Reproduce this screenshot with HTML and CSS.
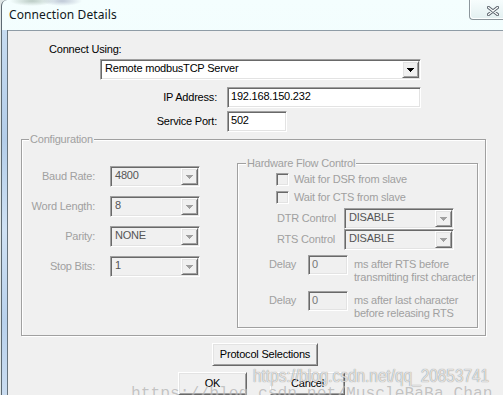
FILE: index.html
```html
<!DOCTYPE html>
<html>
<head>
<meta charset="utf-8">
<title>Connection Details</title>
<link rel="stylesheet" href="styles.css">
</head>
<body>
<div class="window">
  <div class="titlebar">
    <span class="title">Connection Details</span>
    <div class="close">
      <svg width="12" height="10" viewBox="0 0 12 10"><path d="M1.5 1.5L10.5 8.5M10.5 1.5L1.5 8.5" stroke="#5b636c" stroke-width="3.2" stroke-linecap="round"/><path d="M1.5 1.5L10.5 8.5M10.5 1.5L1.5 8.5" stroke="#fbfdfd" stroke-width="1.3" stroke-linecap="round"/></svg>
    </div>
  </div>
  <div class="frame">
    <div class="frame-left"></div>
    <div class="client">
      <div class="connect-label">Connect Using:</div>
      <div class="combo combo-main sunken">
        <span class="val">Remote modbusTCP Server</span>
        <span class="drop raised"><svg class="arrow" width="7" height="4" viewBox="0 0 7 4"><path d="M0 0h7v1h-1v1h-1v1h-1v1h-1v-1h-1v-1h-1v-1h-1z"/></svg></span>
      </div>
      <div class="field-row">
        <span class="lbl">IP Address:</span>
        <div class="field sunken ip">192.168.150.232</div>
      </div>
      <div class="field-row">
        <span class="lbl">Service Port:</span>
        <div class="field sunken port">502</div>
      </div>

      <div class="group config">
        <span class="legend">Configuration</span>
        <div class="config-left">
          <div class="cfg-row">
            <span class="cfg-lbl">Baud Rate:</span>
            <div class="combo combo-dis sunken"><span class="val">4800</span><span class="drop raised"><svg class="arrow" width="7" height="4" viewBox="0 0 7 4"><path d="M0 0h7v1h-1v1h-1v1h-1v1h-1v-1h-1v-1h-1v-1h-1z"/></svg></span></div>
          </div>
          <div class="cfg-row">
            <span class="cfg-lbl">Word Length:</span>
            <div class="combo combo-dis sunken"><span class="val">8</span><span class="drop raised"><svg class="arrow" width="7" height="4" viewBox="0 0 7 4"><path d="M0 0h7v1h-1v1h-1v1h-1v1h-1v-1h-1v-1h-1v-1h-1z"/></svg></span></div>
          </div>
          <div class="cfg-row">
            <span class="cfg-lbl">Parity:</span>
            <div class="combo combo-dis sunken"><span class="val">NONE</span><span class="drop raised"><svg class="arrow" width="7" height="4" viewBox="0 0 7 4"><path d="M0 0h7v1h-1v1h-1v1h-1v1h-1v-1h-1v-1h-1v-1h-1z"/></svg></span></div>
          </div>
          <div class="cfg-row">
            <span class="cfg-lbl">Stop Bits:</span>
            <div class="combo combo-dis sunken"><span class="val">1</span><span class="drop raised"><svg class="arrow" width="7" height="4" viewBox="0 0 7 4"><path d="M0 0h7v1h-1v1h-1v1h-1v1h-1v-1h-1v-1h-1v-1h-1z"/></svg></span></div>
          </div>
        </div>

        <div class="group hfc">
          <span class="legend legend-hfc">Hardware Flow Control</span>
          <div class="chk-row"><span class="chk sunken"></span><span>Wait for DSR from slave</span></div>
          <div class="chk-row"><span class="chk sunken"></span><span>Wait for CTS from slave</span></div>
          <div class="ctl-row">
            <span class="ctl-lbl">DTR Control</span>
            <div class="combo combo-dis combo-ctl sunken"><span class="val">DISABLE</span><span class="drop raised"><svg class="arrow" width="7" height="4" viewBox="0 0 7 4"><path d="M0 0h7v1h-1v1h-1v1h-1v1h-1v-1h-1v-1h-1v-1h-1z"/></svg></span></div>
          </div>
          <div class="ctl-row">
            <span class="ctl-lbl">RTS Control</span>
            <div class="combo combo-dis combo-ctl sunken"><span class="val">DISABLE</span><span class="drop raised"><svg class="arrow" width="7" height="4" viewBox="0 0 7 4"><path d="M0 0h7v1h-1v1h-1v1h-1v1h-1v-1h-1v-1h-1v-1h-1z"/></svg></span></div>
          </div>
          <div class="delay-row">
            <span class="delay-lbl">Delay</span>
            <div class="delay-box sunken">0</div>
            <div class="delay-desc">ms after RTS before<br>transmitting first character</div>
          </div>
          <div class="delay-row">
            <span class="delay-lbl">Delay</span>
            <div class="delay-box sunken">0</div>
            <div class="delay-desc">ms after last character<br>before releasing RTS</div>
          </div>
        </div>
      </div>

      <div class="btn raised btn-protocol">Protocol Selections</div>
      <div class="ok-row">
        <div class="btn raised btn-ok">OK</div>
        <div class="btn raised btn-cancel">Cancel</div>
      </div>
    </div>
  </div>
</div>
<div class="wm wm1">https://blog.csdn.net/qq_20853741</div>
<div class="wm wm2">https://blog.csdn.net/MuscleBaBa_Chan</div>
</body>
</html>
```

FILE: styles.css
```css
* { box-sizing: border-box; }

html, body { margin: 0; padding: 0; }

body {
  width: 503px;
  height: 395px;
  overflow: hidden;
  position: relative;
  background: #dfe6e6;
  font-family: "Liberation Sans", Arial, sans-serif;
  font-size: 11px;
  letter-spacing: -0.2px;
  color: #000;
}

.window {
  margin-left: 1px;
  width: 516px;
  height: 395px;
  overflow: hidden;
  border-left: 1px solid #5d6972;
  border-top-left-radius: 6px;
  background:
    radial-gradient(ellipse 22px 5px at 30px 1px, rgba(80, 110, 90, 0.35), transparent),
    radial-gradient(ellipse 20px 5px at 60px 1px, rgba(90, 100, 140, 0.35), transparent),
    linear-gradient(#f4fefe, #e7f8f9);
  display: flex;
  flex-direction: column;
}

.titlebar {
  height: 30px;
  flex: none;
  display: flex;
  align-items: flex-start;
}

.title {
  margin: 7px 0 0 7px;
  font-family: "Noto Sans", "Open Sans", sans-serif;
  font-size: 12px;
  line-height: 16px;
  letter-spacing: 0.1px;
  color: #101820;
}

.close {
  margin-left: auto;
  width: 48px;
  height: 20px;
  border-left: 1px solid #8c969c;
  border-bottom: 1px solid #8c969c;
  border-bottom-left-radius: 4px;
  background: linear-gradient(#f7fdfd, #e3f0f1);
  box-shadow: inset 1px -1px 0 #fdffff;
  padding: 6px 0 0 17px;
  display: flex;
  align-items: flex-start;
}

.frame {
  flex: 1;
  min-height: 0;
  display: flex;
}

.frame-left {
  width: 6px;
  background: linear-gradient(#c6dbf0, #b3cde9 30%, #cfe1f3 55%, #b8d1ec 80%, #cadcf0);
  border-right: 1px solid #66737d;
}

.client {
  flex: 1;
  background: #f0f0f0;
  border-top: 1px solid #8f9ca6;
  padding-top: 12px;
  overflow: hidden;
}

/* 3D borders */
.sunken {
  border: 1px solid;
  border-color: #a0a0a0 #ffffff #ffffff #a0a0a0;
  padding: 1px;
  box-shadow: inset 1px 1px 0 #696969, inset -1px -1px 0 #e3e3e3;
}

.raised {
  border: 1px solid;
  border-color: #ffffff #696969 #696969 #ffffff;
  box-shadow: inset 1px 1px 0 #e3e3e3, inset -1px -1px 0 #a0a0a0;
  background: #f0f0f0;
}

/* top section */
.connect-label {
  margin-left: 41px;
  line-height: 13px;
}

.combo {
  display: flex;
  height: 21px;
  background: #fff;
}

.combo .val {
  flex: 1;
  line-height: 15px;
  padding-left: 3px;
  white-space: nowrap;
}

.combo .drop {
  width: 17px;
  display: flex;
  align-items: center;
  justify-content: center;
}

.arrow { display: block; fill: #000; }

.combo-main {
  margin: 3px 0 0 92px;
  width: 321px;
}

.field-row {
  display: flex;
  align-items: center;
  margin-top: 7px;
}

.field-row + .field-row { margin-top: 3px; }

.lbl {
  width: 209px;
  text-align: right;
  line-height: 13px;
  margin-right: 10px;
}

.field {
  height: 21px;
  background: #fff;
  line-height: 15px;
  padding-left: 3px;
}

.ip { width: 194px; }
.port { width: 60px; }

/* group boxes */
.group {
  position: relative;
  border: 1px solid #a0a0a0;
  box-shadow: inset 1px 1px 0 #fff, 1px 1px 0 #fff;
}

.legend {
  position: absolute;
  top: -7px;
  left: 7px;
  padding: 0 1px;
  background: #f0f0f0;
  line-height: 13px;
  color: #a0a0a0;
  white-space: nowrap;
}

.legend-hfc { left: 8px; }

.config {
  margin: 7px 0 0 13px;
  width: 465px;
  height: 197px;
  display: flex;
  align-items: flex-start;
}

.config-left {
  margin-top: 26px;
  width: 178px;
  display: flex;
  flex-direction: column;
  gap: 9px;
}

.cfg-row {
  display: flex;
  align-items: center;
}

.cfg-lbl {
  width: 73px;
  margin-right: 15px;
  text-align: right;
  line-height: 13px;
  color: #a0a0a0;
}

.combo-dis {
  width: 90px;
  background: #f0f0f0;
}

.combo-dis .val { color: #555; }
.combo-dis .arrow { fill: #a0a0a0; }

.hfc {
  margin: 23px 0 0 37px;
  width: 241px;
  height: 165px;
  padding-top: 9px;
  color: #a0a0a0;
}

.chk-row {
  display: flex;
  align-items: center;
  gap: 5px;
  margin-left: 38px;
  height: 13px;
  line-height: 13px;
  white-space: nowrap;
}

.chk-row + .chk-row { margin-top: 5px; }

.chk {
  width: 13px;
  height: 13px;
  background: #f0f0f0;
}

.ctl-row {
  display: flex;
  align-items: center;
  margin-left: 39px;
}

.chk-row + .ctl-row { margin-top: 4px; }

.ctl-lbl {
  width: 67px;
  line-height: 13px;
  white-space: nowrap;
}

.combo-ctl { width: 110px; }

.delay-row {
  display: flex;
  align-items: flex-start;
  margin-left: 31px;
  height: 36px;
}

.ctl-row + .delay-row { margin-top: 5px; }

.delay-lbl {
  width: 39px;
  margin-top: 3px;
  line-height: 13px;
}

.delay-box {
  width: 40px;
  height: 20px;
  background: #f0f0f0;
  line-height: 15px;
  padding-left: 3px;
  color: #777;
}

.delay-desc {
  margin: 3px 0 0 6px;
  line-height: 13px;
  white-space: nowrap;
}

/* buttons */
.btn {
  height: 23px;
  display: flex;
  align-items: center;
  justify-content: center;
  line-height: 13px;
  white-space: nowrap;
}

.btn-protocol {
  margin: 7px 0 0 204px;
  width: 106px;
}

.ok-row {
  display: flex;
  gap: 23px;
  margin: 6px 0 0 170px;
}

.btn-ok { width: 69px; }
.btn-cancel { width: 75px; }

/* watermarks */
.wm {
  position: absolute;
  white-space: nowrap;
  letter-spacing: 0;
  pointer-events: none;
}

.wm1 {
  left: 253px;
  top: 365px;
  font-size: 19px;
  line-height: 22px;
  transform: scaleX(0.81);
  transform-origin: left top;
  color: rgba(255, 255, 255, 0.75);
  text-shadow: 0 0 1px rgba(0, 0, 0, 0.35), 0 0 1px rgba(0, 0, 0, 0.25);
}

.wm2 {
  left: 131px;
  top: 386px;
  font-family: "Liberation Mono", "Courier New", monospace;
  font-size: 16.3px;
  line-height: 16px;
  color: rgba(150, 150, 150, 0.55);
  text-shadow: 0 0 1px rgba(255, 255, 255, 0.6);
}
```
